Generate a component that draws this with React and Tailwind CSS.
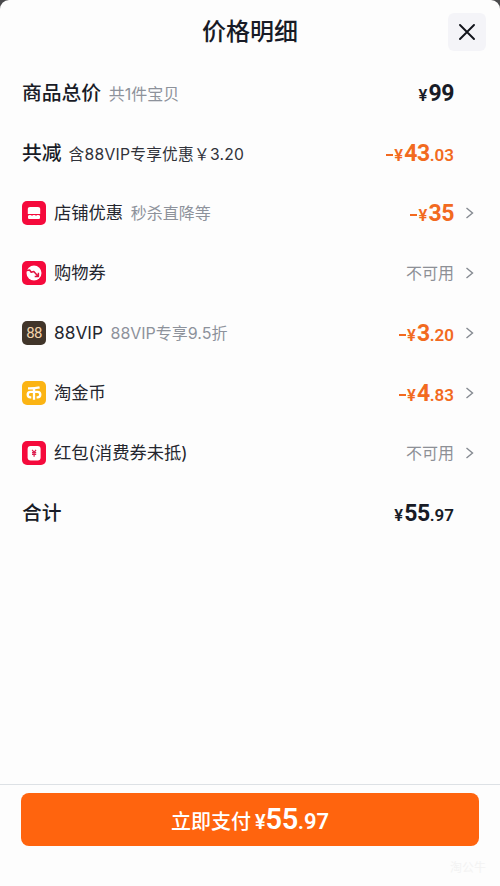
const StoreIcon = () => (
  <svg viewBox="0 0 24 24" className="h-6 w-6 shrink-0">
    <rect width="24" height="24" rx="5" fill="#f50a3c" />
    <path d="M8 6h8c1.400 0 2.200.8 2.200 2v5H5.800V8C5.800 6.800 6.600 6 8 6Z" fill="#fff" />
    <path d="M6 14.600c1 0 1-.5 2-.5s1 .5 2 .5 1-.5 2-.5 1 .5 2 .5 1-.5 2-.5 1 .5 2 .5v2.100c0 .9-.6 1.400-1.400 1.400H7.400c-.8 0-1.400-.5-1.400-1.400Z" fill="#fff" />
  </svg>
);

const CouponIcon = () => (
  <svg viewBox="0 0 24 24" className="h-6 w-6 shrink-0">
    <rect width="24" height="24" rx="5" fill="#f50a3c" />
    <circle cx="12" cy="12" r="7.500" fill="#fff" />
    <path
      d="M5 9.500 7.600 9l1.600 2.300 2.600-.8 4 4.500M16.400 11.800v3.700h-3.700"
      fill="none"
      stroke="#e01440"
      strokeWidth="1.500"
      strokeLinejoin="round"
    />
  </svg>
);

const VipIcon = () => (
  <div className="flex h-6 w-6 shrink-0 items-center justify-center rounded-[5px] bg-[#41352a]">
    <span className="font-['Roboto',sans-serif] text-[15px] leading-none tracking-[-0.6px] text-[#f3d3aa]">88</span>
  </div>
);

const CoinIcon = () => (
  <svg viewBox="0 0 24 24" className="h-6 w-6 shrink-0">
    <rect width="24" height="24" rx="5" fill="#fbb414" />
    <g fill="none" stroke="#fff" strokeWidth="2.300">
      <path d="M6 7.400C10 7.500 14 7.200 17.600 6.300M12 7v11.700" />
      <path d="M10.600 10.800H8.500a2.800 2.800 0 0 0 0 5.600h.8M9 10.800h6.500a2.800 2.800 0 0 1 0 5.600h-.9" />
    </g>
  </svg>
);

const RedPacketIcon = () => (
  <svg viewBox="0 0 24 24" className="h-6 w-6 shrink-0">
    <rect width="24" height="24" rx="5" fill="#f50a3c" />
    <rect x="5.600" y="5" width="13" height="14.400" rx="3" fill="#fff" />
    <path d="m10.200 8.900 1.900 2.500L14 8.900M10 11.600h4.200M10 13.300h4.200M12.100 11.400v4.300" fill="none" stroke="#dc2052" strokeWidth="1.200" />
  </svg>
);

const Chevron = () => (
  <svg viewBox="0 0 9 12" className="h-3 w-[9px]" fill="none" stroke="#858a91" strokeWidth="1.400">
    <path d="M1.500 1 7.500 6l-6 5" />
  </svg>
);

const Price = ({ int, dec, minus }) => (
  <span className="flex items-baseline font-['Roboto',sans-serif] font-bold leading-none">
    {minus && <span className="mr-[1.500px] h-[2px] w-[7px] -translate-y-[5px] bg-current" />}
    <span className="mr-px text-[16.500px] font-semibold">¥</span>
    <span className="text-[23px] tracking-[-0.4px]">{int}</span>
    {dec && <span className="text-[17px] font-semibold">.{dec}</span>}
  </span>
);

const rows = [
  { label: "商品总价", note: "共1件宝贝", int: "99", bold: true },
  { label: "共减", note: "含88VIP专享优惠￥3.20", int: "43", dec: "03", minus: true, bold: true, darkNote: true },
  { icon: StoreIcon, label: "店铺优惠", note: "秒杀直降等", int: "35", minus: true },
  { icon: CouponIcon, label: "购物券" },
  { icon: VipIcon, label: "88VIP", note: "88VIP专享9.5折", int: "3", dec: "20", minus: true },
  { icon: CoinIcon, label: "淘金币", int: "4", dec: "83", minus: true },
  { icon: RedPacketIcon, label: "红包(消费券未抵)" },
  { label: "合计", int: "55", dec: "97", bold: true },
];

const Row = ({ icon: Icon, label, note, int, dec, minus, bold, darkNote }) => (
  <div className="flex h-[60px] items-center pl-[22px] pr-[26px]">
    {Icon && (
      <span className="mr-2">
        <Icon />
      </span>
    )}
    <div className={bold ? "flex items-baseline whitespace-nowrap pt-px" : "flex items-baseline whitespace-nowrap"}>
      <span className={bold ? "text-[19.800px] font-medium text-[#181b26]" : "text-[17.300px] text-[#24262e]"}>{label}</span>
      {note && (
        <span className={darkNote ? "ml-[7px] text-[15.700px] tracking-[0.25px] text-[#30323a]" : "ml-[7.500px] text-[16px] text-[#8d929b]"}>
          {note}
        </span>
      )}
    </div>
    <div className={minus ? "ml-auto text-[#f26a20]" : "ml-auto text-[#181b26]"}>
      {int ? <Price int={int} dec={dec} minus={minus} /> : <span className="text-[16px] text-[#8d9096]">不可用</span>}
    </div>
    <div className="flex w-5 justify-end">{Icon && <Chevron />}</div>
  </div>
);

export default function App() {
  return (
    <div className="h-[886px] w-full bg-[#4a4a4c] font-['Inter','Noto_Sans_CJK_SC',sans-serif]">
      <div className="flex h-full flex-col rounded-t-[9px] bg-[#fdfdfd]">
        <header className="flex h-[63px] shrink-0 items-center pr-[14px]">
          <h1 className="flex-1 pl-[52px] pt-px text-center text-[24px] font-medium text-[#181b26]">价格明细</h1>
          <button className="flex h-[38px] w-[38px] items-center justify-center rounded-[6px] bg-[#f4f4f8]">
            <svg viewBox="0 0 16 16" className="h-4 w-4" fill="none" stroke="#11141b" strokeWidth="1.900" strokeLinecap="round">
              <path d="m1 1 14 14M15 1 1 15" />
            </svg>
          </button>
        </header>

        <main className="flex-1">
          {rows.map((row) => (
            <Row key={row.label} {...row} />
          ))}
        </main>

        <footer className="flex h-[102px] shrink-0 flex-col border-t border-[#dde1e5] pl-[21px] pr-[14px] pt-[8px]">
          <div className="pr-[7px]">
            <button className="flex h-[53px] w-full items-center justify-center rounded-[8px] bg-[#ff640e] text-white">
              <span className="flex items-baseline leading-none">
                <span className="mr-1 text-[20px] font-medium">立即支付</span>
                <span className="flex items-baseline font-['Roboto',sans-serif] font-semibold">
                  <span className="text-[20px]">¥</span>
                  <span className="text-[29px] tracking-[-0.5px]">55</span>
                  <span className="text-[22px]">.97</span>
                </span>
              </span>
            </button>
          </div>
          <span className="mt-[16px] self-end text-[12px] leading-none text-[#f3f3f3]">淘公牛</span>
        </footer>
      </div>
    </div>
  );
}
